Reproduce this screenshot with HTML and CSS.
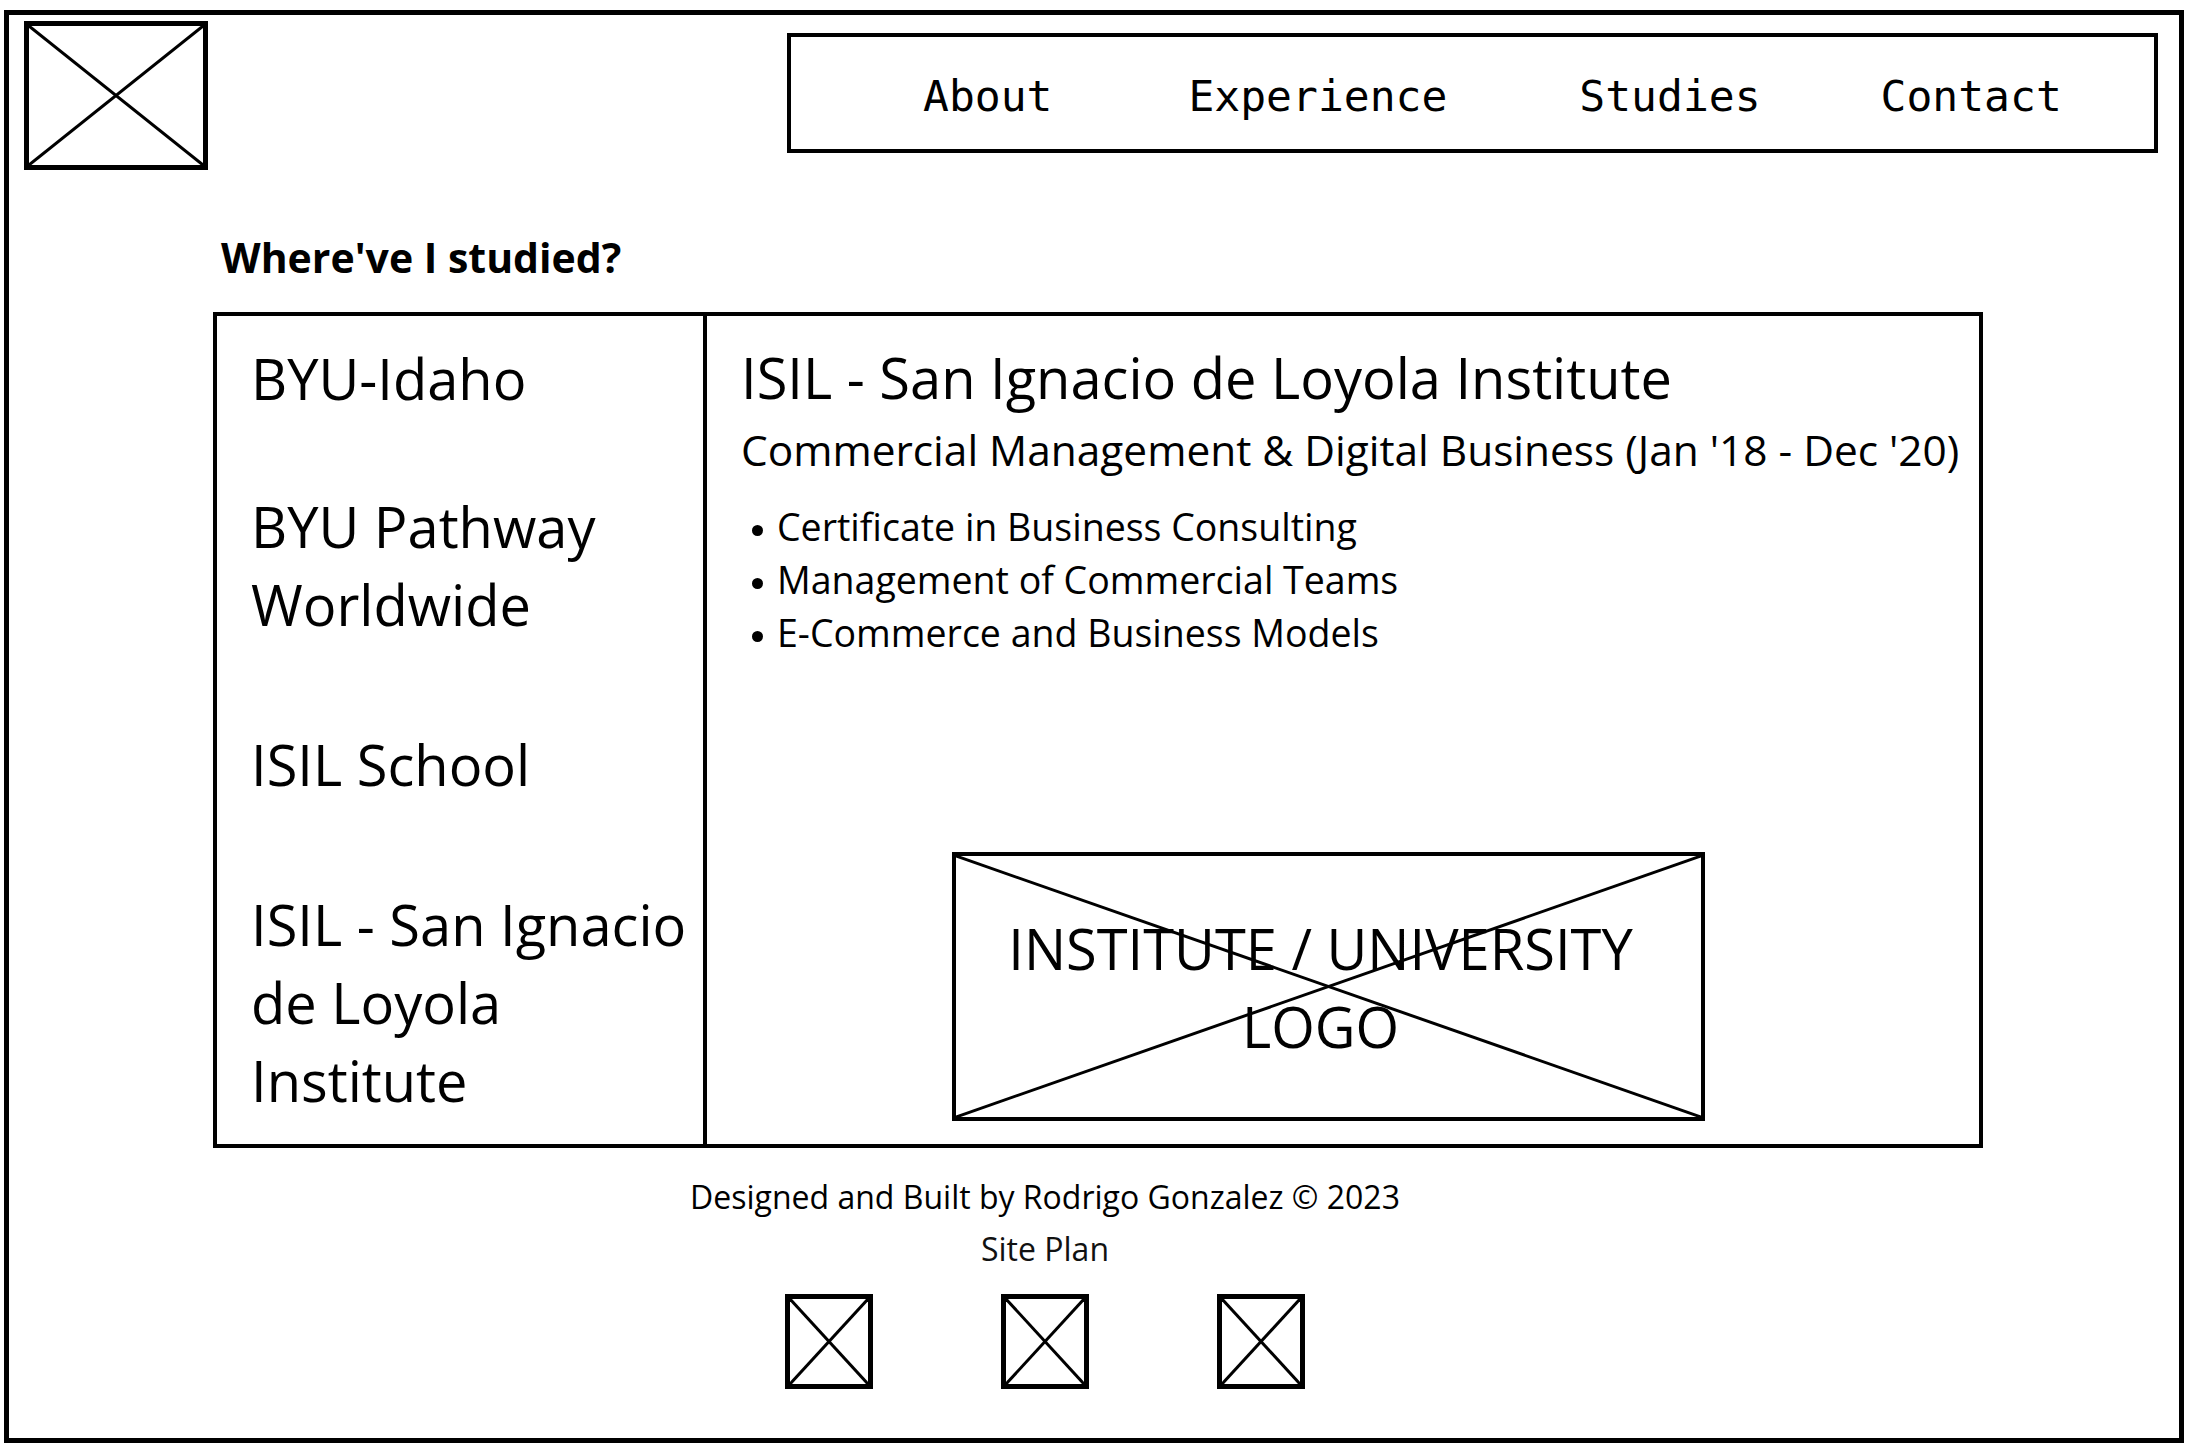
FILE: index.html
```html
<!DOCTYPE html>
<html lang="en">

<head>
    <meta charset="UTF-8">
    <meta name="viewport" content="width=device-width, initial-scale=1.0">
    <title>Studies | Rodrigo Gonzalez</title>

    <link rel="stylesheet" href="styles.css">
</head>

<body>
    <div id="page">
        <header class="top">
            <div class="ph logo">
                <svg class="cross" viewBox="0 0 100 100" preserveAspectRatio="none">
                    <line x1="0" y1="0" x2="100" y2="100" />
                    <line x1="100" y1="0" x2="0" y2="100" />
                </svg>
            </div>
            <nav class="menu">
                <a href="#">About</a>
                <a href="#">Experience</a>
                <a href="#">Studies</a>
                <a href="#">Contact</a>
            </nav>
        </header>

        <section class="studies">
            <h2>Where've I studied?</h2>
            <div class="tabs">
                <ul class="schools">
                    <li>BYU-Idaho</li>
                    <li>BYU Pathway Worldwide</li>
                    <li>ISIL School</li>
                    <li>ISIL - San Ignacio de Loyola Institute</li>
                </ul>
                <div class="detail">
                    <h3>ISIL - San Ignacio de Loyola Institute</h3>
                    <p class="degree">Commercial Management &amp; Digital Business (Jan '18 - Dec '20)</p>
                    <ul class="courses">
                        <li>Certificate in Business Consulting</li>
                        <li>Management of Commercial Teams</li>
                        <li>E-Commerce and Business Models</li>
                    </ul>
                    <div class="ph school-logo">
                        <svg class="cross" viewBox="0 0 100 100" preserveAspectRatio="none">
                            <line x1="0" y1="0" x2="100" y2="100" />
                            <line x1="100" y1="0" x2="0" y2="100" />
                        </svg>
                        <span>INSTITUTE / UNIVERSITY LOGO</span>
                    </div>
                </div>
            </div>
        </section>

        <footer>
            <p class="copy">Designed and Built by Rodrigo Gonzalez © 2023</p>
            <p class="plan">Site Plan</p>
            <div class="socials">
                <a href="#" class="ph icon">
                    <svg class="cross" viewBox="0 0 100 100" preserveAspectRatio="none">
                        <line x1="0" y1="0" x2="100" y2="100" />
                        <line x1="100" y1="0" x2="0" y2="100" />
                    </svg>
                </a>
                <a href="#" class="ph icon">
                    <svg class="cross" viewBox="0 0 100 100" preserveAspectRatio="none">
                        <line x1="0" y1="0" x2="100" y2="100" />
                        <line x1="100" y1="0" x2="0" y2="100" />
                    </svg>
                </a>
                <a href="#" class="ph icon">
                    <svg class="cross" viewBox="0 0 100 100" preserveAspectRatio="none">
                        <line x1="0" y1="0" x2="100" y2="100" />
                        <line x1="100" y1="0" x2="0" y2="100" />
                    </svg>
                </a>
            </div>
        </footer>
    </div>
</body>

</html>
```

FILE: styles.css
```css
html {
font-family: "Open Sans", "Noto Sans", sans-serif;
color: #000;
}

body {
margin: 0;
background-color: #fff;
}

#page {
box-sizing: border-box;
height: 1433px;
margin: 10px 6px 0 4px;
border: 5px solid #000;
}

a {
color: #000;
text-decoration: none;
}

/* wireframe placeholder: box with an X */
.ph {
position: relative;
box-sizing: border-box;
border: 5px solid #000;
}

.cross {
position: absolute;
top: 0;
left: 0;
width: 100%;
height: 100%;
}

.cross line {
stroke: #000;
stroke-width: 3px;
vector-effect: non-scaling-stroke;
}

.top {
display: flex;
justify-content: space-between;
align-items: flex-start;
}

.logo {
width: 184px;
height: 149px;
margin: 6px 0 0 15px;
}

.menu {
box-sizing: border-box;
display: flex;
align-items: center;
width: 1371px;
height: 120px;
margin: 18px 21px 0 0;
padding: 6px 0 0 132px;
border: 4px solid #000;
font-family: "DejaVu Sans Mono", monospace;
font-size: 43px;
}

.menu a:nth-child(2) {
margin-left: 136px;
}

.menu a:nth-child(3) {
margin-left: 132px;
}

.menu a:nth-child(4) {
margin-left: 120px;
}

.studies {
width: 1770px;
margin-left: 204px;
}

.studies h2 {
margin: 60px 0 28px 8px;
font-size: 41px;
font-weight: 700;
line-height: 54px;
}

.tabs {
display: flex;
border: 4px solid #000;
}

.schools {
box-sizing: border-box;
width: 490px;
margin: 0;
padding: 23px 0 25px 34px;
border-right: 4px solid #000;
list-style: none;
font-size: 56px;
line-height: 78px;
}

.schools li + li {
margin-top: 82px;
}

.schools li:nth-child(2) {
margin-top: 70px;
}

.detail {
flex: 1;
display: flex;
flex-direction: column;
padding: 22px 0 23px 34px;
}

.detail h3 {
margin: 0;
font-size: 56px;
font-weight: 400;
line-height: 78px;
}

.degree {
margin: 5px 0 0;
font-size: 42.4px;
line-height: 58px;
}

.courses {
margin: 21px 0 0;
padding: 0;
list-style: none;
font-size: 37.5px;
line-height: 53px;
}

.courses li::before {
content: "";
display: inline-block;
width: 11px;
height: 11px;
margin: 0 14px 5px 11px;
border-radius: 50%;
background-color: #000;
}

.school-logo {
display: flex;
align-items: center;
justify-content: center;
width: 753px;
height: 269px;
margin: auto 0 0 211px;
padding: 0 56px 0 40px;
border-width: 4px;
font-size: 56px;
line-height: 78px;
text-align: center;
}

.school-logo span {
position: relative;
}

footer {
margin-right: 98px;
text-align: center;
}

footer p {
margin: 0;
font-size: 32px;
line-height: 44px;
}

.copy {
margin-top: 27px;
}

.plan {
margin-top: 8px;
color: #111;
}

.socials {
display: flex;
justify-content: center;
gap: 128px;
margin-top: 23px;
}

.icon {
display: block;
width: 88px;
height: 95px;
}
```
